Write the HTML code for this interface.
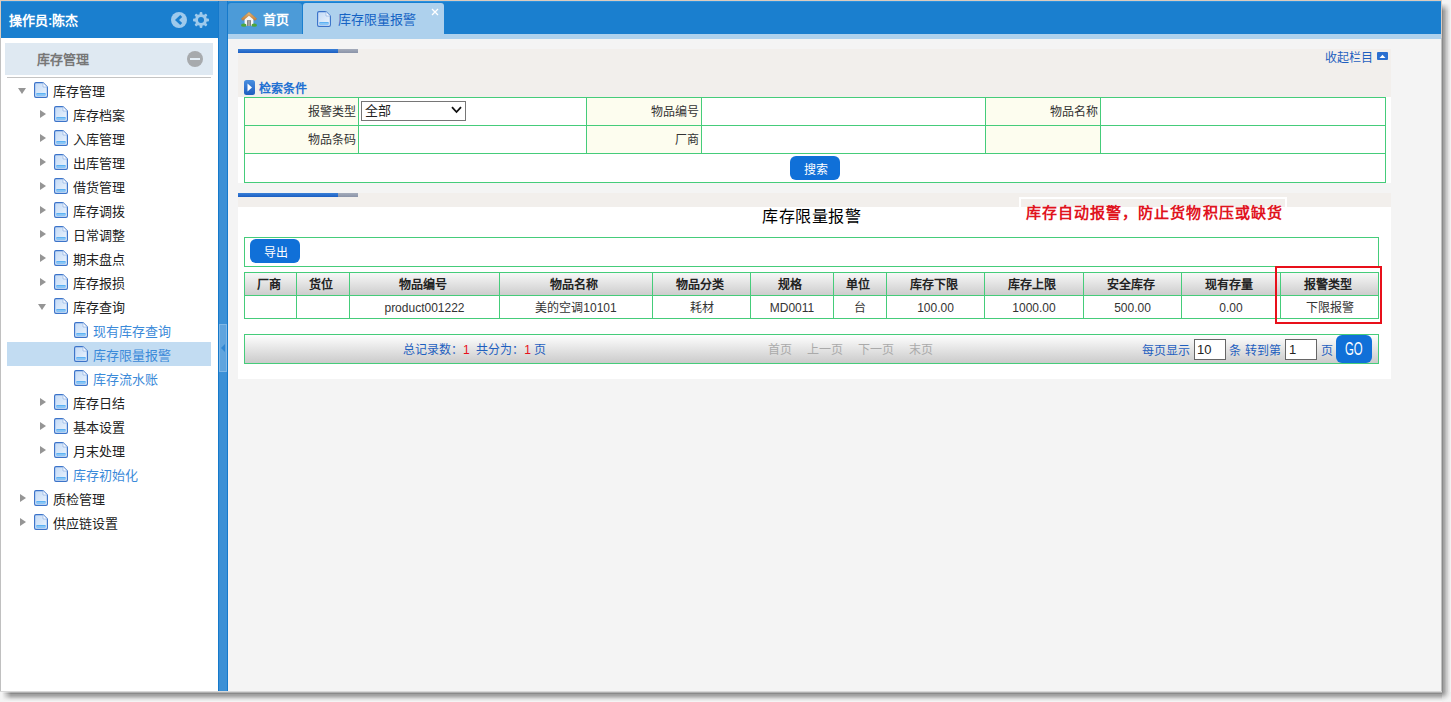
<!DOCTYPE html>
<html lang="zh-CN">
<head>
<meta charset="utf-8">
<style>
*{margin:0;padding:0;box-sizing:border-box}
html,body{width:1451px;height:702px;overflow:hidden;background:#f3f3f3;font-family:"Liberation Sans",sans-serif;font-size:12px;color:#222}
.a{position:absolute}
.t{position:absolute;white-space:nowrap}
/* shadow */
#shr{left:1442px;top:0;width:9px;height:692px;background:linear-gradient(to right,#8a8a8a 0px,#8a8a8a 1px,#a0a0a0 1px,#a0a0a0 2px,#a8a8a8 2px,#a8a8a8 3px,#b8b8b8 3px,#b8b8b8 4px,#c8c8c8 4px,#c8c8c8 5px,#d0d0d0 5px,#d0d0d0 6px,#e0e0e0 6px,#e0e0e0 7px,#e8e8e8 7px,#e8e8e8 8px,#f2f2f2 8px,#f2f2f2 9px)}
#shb{left:0;top:692px;width:1442px;height:10px;background:linear-gradient(to bottom,#b0b0b0 0px,#b0b0b0 1px,#8a8a8a 1px,#8a8a8a 2px,#a0a0a0 2px,#a0a0a0 3px,#a6a6a6 3px,#a6a6a6 4px,#b4b4b4 4px,#b4b4b4 5px,#c4c4c4 5px,#c4c4c4 6px,#d6d6d6 6px,#d6d6d6 7px,#e4e4e4 7px,#e4e4e4 8px,#ececec 8px,#ececec 9px,#f4f4f4 9px,#f4f4f4 10px)}
#topb{left:0;top:0;width:1442px;height:1px;background:#dccbbd}
#leftb{left:0;top:0;width:1px;height:691px;background:#c0c0c0}
#side{left:1px;top:1px;width:217px;height:690px;background:#fff}
#sh{left:1px;top:1px;width:217px;height:37px;background:#1a7fcf}
#split{left:218px;top:1px;width:10px;height:690px;background:#3b90d6;border-left:1px solid #1579cb;border-right:1px solid #1579cb}
#handle{left:219px;top:324px;width:8px;height:48px;background:#5fa4de;border:1px solid #7fb7e6}
#topbar{left:228px;top:1px;width:1213px;height:33px;background:#1a7fcf}
#strip{left:228px;top:34px;width:1213px;height:5px;background:#aed1ed}
#content{left:228px;top:39px;width:1213px;height:652px;background:#f4f4f4}
.tab1{left:228px;top:3px;width:74px;height:31px;background:#4c9bd8;border-radius:3px 3px 0 0}
.tab2{left:303px;top:3px;width:141px;height:36px;background:#aed1ed;border-radius:3px 3px 0 0}
.row{position:absolute;left:1px;width:216px;height:24px;line-height:24px;font-size:13px;color:#222}
.row .tx{position:absolute;top:2px}
.row svg{position:absolute;top:4px}
.tri-d{position:absolute;width:0;height:0;border-left:4.5px solid transparent;border-right:4.5px solid transparent;border-top:6px solid #959595;top:10px}
.tri-r{position:absolute;width:0;height:0;border-top:4.5px solid transparent;border-bottom:4.5px solid transparent;border-left:6px solid #959595;top:8px}
.leaf{color:#3b8ad9}
.sel{background:#c2dcf2}
.ph{position:absolute;left:238px;width:1153px;background:#f2efec}
.bar1{position:absolute;left:238px;width:100px;height:4px;background:linear-gradient(#3a80d8,#1c5ec2)}
.bar2{position:absolute;left:338px;width:20px;height:4px;background:linear-gradient(#a4acbb,#8a93a8)}
.pb{position:absolute;left:238px;width:1153px;background:#fff}
.g{background:#45cc7a}
.lab{position:absolute;background:#fdfdef}
.btn{position:absolute;background:#1070d8;border-radius:6px;color:#fff;text-align:center}
</style>
</head>
<body>
<div id="shr" class="a"></div>
<div id="shb" class="a"></div>
<div class="a" style="left:1442px;top:0;width:9px;height:11px;background:linear-gradient(to bottom,#f4f4f4 0,#f4f4f4 3px,rgba(244,244,244,0) 11px)"></div>
<div class="a" style="left:0;top:692px;width:11px;height:10px;background:linear-gradient(to right,#f4f4f4 0,#f4f4f4 2px,rgba(244,244,244,0) 11px)"></div>
<div class="a" style="left:1442px;top:692px;width:9px;height:10px;background:radial-gradient(circle at 0 0,#8a8a8a 0,#a6a6a6 2px,#c2c2c2 4px,#dcdcdc 6px,#ececec 8px,#f3f3f3 10px)"></div>
<div id="topb" class="a"></div>
<div id="leftb" class="a"></div>
<div class="a" style="left:1441px;top:0;width:1px;height:692px;background:#c0c0c0"></div>
<div class="a" style="left:1441px;top:0;width:1px;height:38px;background:#d8ccc4"></div>
<div class="a" style="left:0;top:691px;width:1442px;height:1px;background:#d8d8d8"></div>
<div class="a" style="left:0;top:0;width:1px;height:38px;background:#dccbbd"></div>

<!-- sidebar -->
<div id="side" class="a"></div>
<div id="sh" class="a"></div>
<div class="a" style="left:1px;top:1px;width:217px;height:1px;background:#2891e0"></div>
<div class="t" style="left:9px;top:12px;font-size:13px;font-weight:bold;color:#fff;line-height:18px">操作员:陈杰</div>
<svg class="a" style="left:171px;top:12px" width="16" height="16" viewBox="0 0 16 16"><circle cx="8" cy="8" r="8" fill="#9ecaec"/><path d="M10.2 4 L6 8 L10.2 12" fill="none" stroke="#1a7fcf" stroke-width="2.8"/></svg>
<svg class="a" style="left:193px;top:12px" width="16" height="16" viewBox="0 0 16 16"><g fill="#9ecaec"><circle cx="8" cy="8" r="6"/><g id="teeth"><rect x="6.6" y="0" width="2.8" height="3" rx="1"/><rect x="6.6" y="13" width="2.8" height="3" rx="1"/><rect x="0" y="6.6" width="3" height="2.8" rx="1"/><rect x="13" y="6.6" width="3" height="2.8" rx="1"/></g><g transform="rotate(45 8 8)"><rect x="6.6" y="0" width="2.8" height="3" rx="1"/><rect x="6.6" y="13" width="2.8" height="3" rx="1"/><rect x="0" y="6.6" width="3" height="2.8" rx="1"/><rect x="13" y="6.6" width="3" height="2.8" rx="1"/></g></g><circle cx="8" cy="8" r="3" fill="#1a7fcf"/></svg>

<div class="a" style="left:5px;top:43px;width:208px;height:32px;background:#dfe9f2"></div>
<div class="t" style="left:37px;top:51px;font-size:13px;font-weight:bold;color:#777;line-height:18px">库存管理</div>
<svg class="a" style="left:187px;top:51px" width="16" height="16" viewBox="0 0 16 16"><circle cx="8" cy="8" r="8" fill="#a7aaad"/><rect x="3" y="7" width="10" height="2" fill="#e4eef6"/></svg>
<div class="a" style="left:7px;top:77px;width:204px;height:1px;background:#c4c4c4"></div>

<svg width="0" height="0" style="position:absolute">
<defs>
<linearGradient id="dg" x1="0" y1="0" x2="1" y2="1"><stop offset="0" stop-color="#c3daf6"/><stop offset="1" stop-color="#eef5fd"/></linearGradient>
<symbol id="doc" viewBox="0 0 14 16">
<path d="M0.6 2 Q0.6 0.6 2 0.6 H9 L13.4 5 V14 Q13.4 15.4 12 15.4 H2 Q0.6 15.4 0.6 14 Z" fill="url(#dg)" stroke="#3b73c9" stroke-width="1.15"/>
<path d="M9 0.6 V5 H13.4 Z" fill="#f7faff" stroke="#8fb1e2" stroke-width="0.7" stroke-linejoin="round"/>
<rect x="2.4" y="11" width="9.2" height="2.6" fill="#55adf2"/>
<rect x="3" y="11.9" width="8" height="0.7" fill="#a9d8fb"/>
</symbol>
</defs>
</svg>

<!-- tree rows: top = 78 + 24*i -->
<div class="row" style="top:78px"><div class="tri-d" style="left:17px"></div><svg style="left:33px" width="14" height="16"><use href="#doc"/></svg><span class="tx" style="left:52px">库存管理</span></div>
<div class="row" style="top:102px"><div class="tri-r" style="left:39px"></div><svg style="left:53px" width="14" height="16"><use href="#doc"/></svg><span class="tx" style="left:72px">库存档案</span></div>
<div class="row" style="top:126px"><div class="tri-r" style="left:39px"></div><svg style="left:53px" width="14" height="16"><use href="#doc"/></svg><span class="tx" style="left:72px">入库管理</span></div>
<div class="row" style="top:150px"><div class="tri-r" style="left:39px"></div><svg style="left:53px" width="14" height="16"><use href="#doc"/></svg><span class="tx" style="left:72px">出库管理</span></div>
<div class="row" style="top:174px"><div class="tri-r" style="left:39px"></div><svg style="left:53px" width="14" height="16"><use href="#doc"/></svg><span class="tx" style="left:72px">借货管理</span></div>
<div class="row" style="top:198px"><div class="tri-r" style="left:39px"></div><svg style="left:53px" width="14" height="16"><use href="#doc"/></svg><span class="tx" style="left:72px">库存调拨</span></div>
<div class="row" style="top:222px"><div class="tri-r" style="left:39px"></div><svg style="left:53px" width="14" height="16"><use href="#doc"/></svg><span class="tx" style="left:72px">日常调整</span></div>
<div class="row" style="top:246px"><div class="tri-r" style="left:39px"></div><svg style="left:53px" width="14" height="16"><use href="#doc"/></svg><span class="tx" style="left:72px">期末盘点</span></div>
<div class="row" style="top:270px"><div class="tri-r" style="left:39px"></div><svg style="left:53px" width="14" height="16"><use href="#doc"/></svg><span class="tx" style="left:72px">库存报损</span></div>
<div class="row" style="top:294px"><div class="tri-d" style="left:37px"></div><svg style="left:53px" width="14" height="16"><use href="#doc"/></svg><span class="tx" style="left:72px">库存查询</span></div>
<div class="row leaf" style="top:318px"><svg style="left:73px" width="14" height="16"><use href="#doc"/></svg><span class="tx" style="left:92px">现有库存查询</span></div>
<div class="a sel" style="left:7px;top:342px;width:204px;height:24px"></div>
<div class="row leaf" style="top:342px"><svg style="left:73px" width="14" height="16"><use href="#doc"/></svg><span class="tx" style="left:92px">库存限量报警</span></div>
<div class="row leaf" style="top:366px"><svg style="left:73px" width="14" height="16"><use href="#doc"/></svg><span class="tx" style="left:92px">库存流水账</span></div>
<div class="row" style="top:390px"><div class="tri-r" style="left:39px"></div><svg style="left:53px" width="14" height="16"><use href="#doc"/></svg><span class="tx" style="left:72px">库存日结</span></div>
<div class="row" style="top:414px"><div class="tri-r" style="left:39px"></div><svg style="left:53px" width="14" height="16"><use href="#doc"/></svg><span class="tx" style="left:72px">基本设置</span></div>
<div class="row" style="top:438px"><div class="tri-r" style="left:39px"></div><svg style="left:53px" width="14" height="16"><use href="#doc"/></svg><span class="tx" style="left:72px">月末处理</span></div>
<div class="row leaf" style="top:462px"><svg style="left:53px" width="14" height="16"><use href="#doc"/></svg><span class="tx" style="left:72px">库存初始化</span></div>
<div class="row" style="top:486px"><div class="tri-r" style="left:19px"></div><svg style="left:33px" width="14" height="16"><use href="#doc"/></svg><span class="tx" style="left:52px">质检管理</span></div>
<div class="row" style="top:510px"><div class="tri-r" style="left:19px"></div><svg style="left:33px" width="14" height="16"><use href="#doc"/></svg><span class="tx" style="left:52px">供应链设置</span></div>

<!-- splitter -->
<div id="split" class="a"></div>
<div id="handle" class="a"></div>
<div class="a" style="left:221px;top:344px;width:0;height:0;border-top:4.5px solid transparent;border-bottom:4.5px solid transparent;border-right:4px solid #2f86d2"></div>

<!-- top bar -->
<div id="topbar" class="a"></div>
<div class="a" style="left:228px;top:1px;width:1213px;height:1px;background:#2891e0"></div>
<div id="strip" class="a"></div>
<div class="a tab1"></div>
<div class="a tab2"></div>
<div id="content" class="a"></div>

<!-- tabs content -->
<svg class="a" style="left:241px;top:12px" width="16" height="15" viewBox="0 0 16 15">
<defs><linearGradient id="roof" x1="0" y1="0" x2="0" y2="1"><stop offset="0" stop-color="#e6bb7a"/><stop offset="1" stop-color="#c07a35"/></linearGradient></defs>
<path d="M3.6 6 L8 2.4 L12.4 6 V14 H3.6 Z" fill="#f7f7f7"/>
<rect x="6" y="8.2" width="4" height="5.8" fill="#7f7f7f"/>
<rect x="6.8" y="9" width="2.4" height="5" fill="#a0a0a0"/>
<path d="M0.2 6.8 L8 0 L15.8 6.8 L14 8.6 L8 3.4 L2 8.6 Z" fill="url(#roof)" stroke="#b9793a" stroke-width="0.4"/>
<ellipse cx="2.8" cy="13.2" rx="2.8" ry="1.6" fill="#4da63b"/>
<ellipse cx="13.2" cy="13.2" rx="2.8" ry="1.6" fill="#4da63b"/>
</svg>
<div class="t" style="left:263px;top:11px;font-size:13px;font-weight:bold;color:#fff;line-height:18px">首页</div>
<svg class="a" style="left:317px;top:11px" width="14" height="16"><use href="#doc"/></svg>
<div class="t" style="left:338px;top:11px;font-size:13px;color:#1463c4;line-height:18px">库存限量报警</div>
<svg class="a" style="left:431px;top:8px" width="8" height="8" viewBox="0 0 8 8"><path d="M1 1 L7 7 M7 1 L1 7" stroke="#fff" stroke-width="1.3"/></svg>

<!-- panel 1 -->
<div class="ph" style="top:49px;height:48px"></div>
<div class="bar1" style="top:49px"></div><div class="bar2" style="top:49px"></div>
<div class="t" style="left:1325px;top:50px;font-size:12px;color:#1f5fbf;line-height:16px">收起栏目</div>
<svg class="a" style="left:1377px;top:52px" width="11" height="8" viewBox="0 0 11 8"><rect x="0" y="0" width="11" height="8" rx="1" fill="#2a6fd0"/><path d="M2.5 6 L5.5 2.8 L8.5 6 Z" fill="#fff"/></svg>
<svg class="a" style="left:244px;top:80px" width="11" height="15" viewBox="0 0 11 15"><defs><linearGradient id="ab" x1="0" y1="0" x2="0" y2="1"><stop offset="0" stop-color="#4a8fe0"/><stop offset="1" stop-color="#1d5cc0"/></linearGradient></defs><rect x="0" y="0" width="11" height="15" rx="2.5" fill="url(#ab)"/><path d="M3.5 3.5 L8 7.5 L3.5 11.5 Z" fill="#fff"/></svg>
<div class="t" style="left:259px;top:81px;font-size:12px;font-weight:bold;color:#2170d2;line-height:16px">检索条件</div>

<div class="pb" style="top:97px;height:86px"></div>
<!-- search table -->
<div class="a" style="left:244px;top:97px;width:1142px;height:86px;border:1px solid #45cc7a"></div>
<div class="lab" style="left:245px;top:98px;width:113px;height:55px"></div>
<div class="lab" style="left:587px;top:98px;width:114px;height:55px"></div>
<div class="lab" style="left:986px;top:98px;width:114px;height:55px"></div>
<div class="a g" style="left:245px;top:125px;width:1140px;height:1px"></div>
<div class="a g" style="left:245px;top:153px;width:1140px;height:1px"></div>
<div class="a g" style="left:358px;top:98px;width:1px;height:55px"></div>
<div class="a g" style="left:586px;top:98px;width:1px;height:55px"></div>
<div class="a g" style="left:701px;top:98px;width:1px;height:55px"></div>
<div class="a g" style="left:985px;top:98px;width:1px;height:55px"></div>
<div class="a g" style="left:1100px;top:98px;width:1px;height:55px"></div>
<div class="t" style="left:308px;top:104px;font-size:12px;color:#333;line-height:16px">报警类型</div>
<div class="t" style="left:308px;top:132px;font-size:12px;color:#333;line-height:16px">物品条码</div>
<div class="t" style="left:651px;top:104px;font-size:12px;color:#333;line-height:16px">物品编号</div>
<div class="t" style="left:675px;top:132px;font-size:12px;color:#333;line-height:16px">厂商</div>
<div class="t" style="left:1050px;top:104px;font-size:12px;color:#333;line-height:16px">物品名称</div>
<div class="a" style="left:361px;top:101px;width:105px;height:20px;border:1px solid #767676;background:#fff"></div>
<div class="t" style="left:365px;top:103px;font-size:13px;color:#222;line-height:16px">全部</div>
<svg class="a" style="left:451px;top:106px" width="11" height="8" viewBox="0 0 11 8"><path d="M1 1.2 L5.5 6 L10 1.2" fill="none" stroke="#111" stroke-width="1.8"/></svg>
<div class="btn" style="left:790px;top:156px;width:50px;height:24px;line-height:28px;font-size:12px;text-indent:2px">搜索</div>

<!-- panel 2 -->
<div class="ph" style="top:193px;height:14px"></div>
<div class="bar1" style="top:193px"></div><div class="bar2" style="top:193px"></div>
<div class="pb" style="top:207px;height:172px"></div>
<div class="a" style="left:1019px;top:197px;width:268px;height:30px;border:2px solid #fff;border-bottom:0"></div>
<div class="t" style="left:762px;top:208px;font-size:16px;font-weight:500;color:#000;line-height:18px;letter-spacing:0.5px">库存限量报警</div>
<div class="t" style="left:1026px;top:204px;font-size:15px;font-weight:bold;color:#e0141e;line-height:18px;letter-spacing:1.05px">库存自动报警，防止货物积压或缺货</div>

<div class="a" style="left:244px;top:237px;width:1135px;height:30px;border:1px solid #45cc7a"></div>
<div class="btn" style="left:250px;top:239px;width:50px;height:24px;line-height:28px;font-size:12px;text-indent:2px">导出</div>

<!-- data table -->
<div class="a" style="left:244px;top:272px;width:1135px;height:47px;border:1px solid #45cc7a"></div>
<div class="a" style="left:245px;top:273px;width:1133px;height:22px;background:linear-gradient(#f7f7f7,#cdcdcd)"></div>
<div class="a g" style="left:245px;top:295px;width:1133px;height:1px"></div>
<div class="a g" style="left:296px;top:273px;width:1px;height:45px"></div>
<div class="a g" style="left:349px;top:273px;width:1px;height:45px"></div>
<div class="a g" style="left:499px;top:273px;width:1px;height:45px"></div>
<div class="a g" style="left:652px;top:273px;width:1px;height:45px"></div>
<div class="a g" style="left:750px;top:273px;width:1px;height:45px"></div>
<div class="a g" style="left:833px;top:273px;width:1px;height:45px"></div>
<div class="a g" style="left:886px;top:273px;width:1px;height:45px"></div>
<div class="a g" style="left:984px;top:273px;width:1px;height:45px"></div>
<div class="a g" style="left:1083px;top:273px;width:1px;height:45px"></div>
<div class="a g" style="left:1181px;top:273px;width:1px;height:45px"></div>
<div class="a g" style="left:1280px;top:273px;width:1px;height:45px"></div>

<div class="t" style="left:243px;top:277px;width:51px;text-align:center;font-size:12px;font-weight:bold;color:#222;line-height:16px">厂商</div>
<div class="t" style="left:295px;top:277px;width:52px;text-align:center;font-size:12px;font-weight:bold;color:#222;line-height:16px">货位</div>
<div class="t" style="left:348px;top:277px;width:149px;text-align:center;font-size:12px;font-weight:bold;color:#222;line-height:16px">物品编号</div>
<div class="t" style="left:498px;top:277px;width:152px;text-align:center;font-size:12px;font-weight:bold;color:#222;line-height:16px">物品名称</div>
<div class="t" style="left:651px;top:277px;width:97px;text-align:center;font-size:12px;font-weight:bold;color:#222;line-height:16px">物品分类</div>
<div class="t" style="left:749px;top:277px;width:82px;text-align:center;font-size:12px;font-weight:bold;color:#222;line-height:16px">规格</div>
<div class="t" style="left:832px;top:277px;width:52px;text-align:center;font-size:12px;font-weight:bold;color:#222;line-height:16px">单位</div>
<div class="t" style="left:885px;top:277px;width:97px;text-align:center;font-size:12px;font-weight:bold;color:#222;line-height:16px">库存下限</div>
<div class="t" style="left:983px;top:277px;width:98px;text-align:center;font-size:12px;font-weight:bold;color:#222;line-height:16px">库存上限</div>
<div class="t" style="left:1082px;top:277px;width:97px;text-align:center;font-size:12px;font-weight:bold;color:#222;line-height:16px">安全库存</div>
<div class="t" style="left:1180px;top:277px;width:98px;text-align:center;font-size:12px;font-weight:bold;color:#222;line-height:16px">现有存量</div>
<div class="t" style="left:1279px;top:277px;width:97px;text-align:center;font-size:12px;font-weight:bold;color:#222;line-height:16px">报警类型</div>

<div class="t" style="left:350px;top:300px;width:149px;text-align:center;font-size:12px;color:#333;line-height:16px">product001222</div>
<div class="t" style="left:500px;top:300px;width:152px;text-align:center;font-size:12px;color:#333;line-height:16px">美的空调10101</div>
<div class="t" style="left:653px;top:300px;width:97px;text-align:center;font-size:12px;color:#333;line-height:16px">耗材</div>
<div class="t" style="left:751px;top:300px;width:82px;text-align:center;font-size:12px;color:#333;line-height:16px">MD0011</div>
<div class="t" style="left:834px;top:300px;width:52px;text-align:center;font-size:12px;color:#333;line-height:16px">台</div>
<div class="t" style="left:887px;top:300px;width:97px;text-align:center;font-size:12px;color:#333;line-height:16px">100.00</div>
<div class="t" style="left:985px;top:300px;width:98px;text-align:center;font-size:12px;color:#333;line-height:16px">1000.00</div>
<div class="t" style="left:1084px;top:300px;width:97px;text-align:center;font-size:12px;color:#333;line-height:16px">500.00</div>
<div class="t" style="left:1182px;top:300px;width:98px;text-align:center;font-size:12px;color:#333;line-height:16px">0.00</div>
<div class="t" style="left:1281px;top:300px;width:97px;text-align:center;font-size:12px;color:#333;line-height:16px">下限报警</div>

<div class="a" style="left:1275px;top:266px;width:107px;height:58px;border:2px solid #e8101a"></div>

<!-- pager -->
<div class="a" style="left:244px;top:334px;width:1135px;height:30px;border:1px solid #45cc7a;background:linear-gradient(#fefefe,#cbcbcb)"></div>
<div class="t" style="left:403px;top:342px;font-size:12px;color:#1f5fbf;line-height:16px">总记录数：<span style="color:#e8101a">1</span>&nbsp;&nbsp;共分为：<span style="color:#e8101a">1</span> 页</div>
<div class="t" style="left:768px;top:342px;font-size:12px;color:#aaa;line-height:16px">首页</div>
<div class="t" style="left:807px;top:342px;font-size:12px;color:#aaa;line-height:16px">上一页</div>
<div class="t" style="left:858px;top:342px;font-size:12px;color:#aaa;line-height:16px">下一页</div>
<div class="t" style="left:909px;top:342px;font-size:12px;color:#aaa;line-height:16px">末页</div>
<div class="t" style="left:1142px;top:343px;font-size:12px;color:#1f5fbf;line-height:16px">每页显示</div>
<div class="a" style="left:1194px;top:339px;width:32px;height:21px;border:1px solid #666;background:#fff"></div>
<div class="t" style="left:1197px;top:342px;font-size:13px;color:#222;line-height:16px">10</div>
<div class="t" style="left:1229px;top:343px;font-size:12px;color:#1f5fbf;line-height:16px">条</div>
<div class="t" style="left:1245px;top:343px;font-size:12px;color:#1f5fbf;line-height:16px">转到第</div>
<div class="a" style="left:1285px;top:339px;width:32px;height:21px;border:1px solid #666;background:#fff"></div>
<div class="t" style="left:1289px;top:342px;font-size:13px;color:#222;line-height:16px">1</div>
<div class="t" style="left:1321px;top:343px;font-size:12px;color:#1f5fbf;line-height:16px">页</div>
<div class="btn" style="left:1336px;top:335px;width:36px;height:28px;border-radius:6px"></div>
<div class="t" style="left:1345px;top:339px;font-size:19px;color:#fff;line-height:20px;transform:scaleX(0.6);transform-origin:0 0">GO</div>

</body>
</html>
